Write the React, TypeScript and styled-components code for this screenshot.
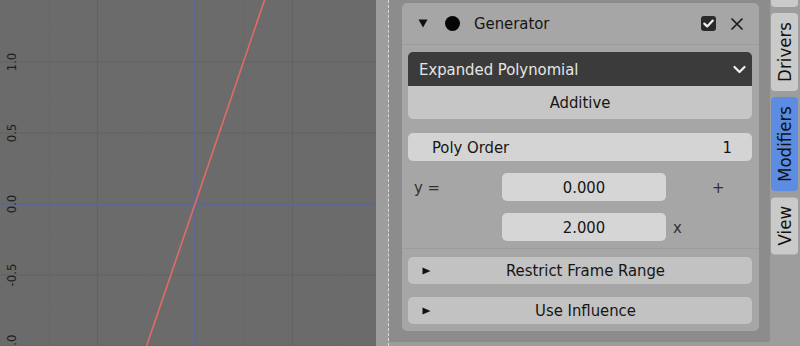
import styled, { createGlobalStyle } from 'styled-components';

const UI_FONT = `"DejaVu Sans Condensed", "DejaVu Sans", "Liberation Sans", sans-serif`;

const GlobalStyle = createGlobalStyle`
  html, body {
    margin: 0;
    padding: 0;
  }
  body {
    background: #9d9d9d;
    font-family: ${UI_FONT};
  }
`;

const Screen = styled.div`
  display: flex;
  width: 800px;
  height: 346px;
  overflow: hidden;
`;

const GraphArea = styled.div`
  flex: none;
  width: 376px;
  height: 346px;
  background: #6b6b6b;
`;

const RightRegion = styled.div`
  flex: 1;
  display: flex;
  padding-left: 12px;
  background: #9d9d9d;
`;

const Splitter = styled.div`
  flex: none;
  width: 0;
  border-left: 1px dashed #dadada;
`;

const Sidebar = styled.div`
  flex: none;
  box-sizing: border-box;
  width: 381px;
  height: 342px;
  padding: 3px 11px 0 13px;
  background: #8c8c8c;
`;

const Panel = styled.div`
  box-sizing: border-box;
  height: 328px;
  display: flex;
  flex-direction: column;
  background: #a6a6a6;
  border-radius: 5px;
  color: #151515;
  font-size: 16.5px;
`;

const Header = styled.div`
  height: 41px;
  display: flex;
  align-items: center;
  padding: 0 16px;
  border-bottom: 1px solid #9c9c9c;
`;

const Dot = styled.div`
  width: 15px;
  height: 15px;
  margin: 0 14px 0 17px;
  border-radius: 50%;
  background: #050505;
`;

const HeaderTitle = styled.span`
  flex: 1;
`;

const HeaderIcon = styled.svg<{ $gap?: number }>`
  display: block;
  margin-left: ${(p) => p.$gap ?? 0}px;
`;

const Body = styled.div`
  padding: 0 7px 0 6px;
  display: flex;
  flex-direction: column;
`;

const ModeGroup = styled.div`
  margin-top: 7px;
  border-radius: 5px;
  overflow: hidden;
`;

const Dropdown = styled.div`
  height: 34px;
  display: flex;
  align-items: center;
  justify-content: space-between;
  padding: 0 6px 0 11px;
  background: #3b3b3b;
  color: #e6e6e6;
`;

const GroupButton = styled.div`
  height: 33px;
  display: flex;
  align-items: center;
  justify-content: center;
  background: #c6c6c6;
`;

const NumberField = styled.div<{ $top: number }>`
  box-sizing: border-box;
  height: 28px;
  margin-top: ${(p) => p.$top}px;
  display: flex;
  align-items: center;
  justify-content: space-between;
  padding: 0 20px 0 24px;
  background: #d4d4d4;
  border-radius: 5px;
`;

const CoeffRow = styled.div`
  margin-top: 12px;
  height: 28px;
  display: grid;
  grid-template-columns: 94px 164px 1fr;
  align-items: center;
`;

const CoeffLabel = styled.span<{ $pad: number }>`
  padding-left: ${(p) => p.$pad}px;
  color: #303030;
`;

const CoeffValue = styled.div`
  height: 28px;
  display: flex;
  align-items: center;
  justify-content: center;
  background: #d6d6d6;
  border-radius: 5px;
`;

const Divider = styled.div`
  height: 1px;
  margin: 7px -7px 0 -6px;
  background: #9c9c9c;
`;

const SubPanel = styled.div<{ $top: number }>`
  height: 27px;
  margin-top: ${(p) => p.$top}px;
  display: flex;
  align-items: center;
  padding: 0 0 0 14px;
  background: #c2c2c2;
  border-radius: 5px;
`;

const SubPanelLabel = styled.span`
  flex: 1;
  text-align: center;
  padding-right: 12px;
`;

const TabColumn = styled.div`
  flex: 1;
  display: flex;
  flex-direction: column;
  gap: 6px;
  padding-left: 1px;
`;

/* tab scrolled mostly out of view above the column */
const TabStub = styled.div`
  width: 27px;
  height: 7px;
  background: #cacaca;
  border-radius: 0 0 4px 4px;
`;

const Tab = styled.div<{ $active?: boolean }>`
  width: 27px;
  padding: 9px 0;
  display: flex;
  align-items: center;
  justify-content: center;
  writing-mode: vertical-rl;
  transform: rotate(180deg);
  font-size: 18.5px;
  color: #111;
  background: ${(p) => (p.$active ? '#5c8de2' : '#cacaca')};
  border-radius: 4px;
`;

// graph geometry
const ORIGIN_X = 195;
const ORIGIN_Y = 204;
const UNIT_Y = 142; // px per 1.0
const X_STEP = 97.5;

const GraphView = () => {
  const majorX = [ORIGIN_X - X_STEP, ORIGIN_X + X_STEP];
  const minorX = [-1.5, -0.5, 0.5, 1.5].map((k) => ORIGIN_X + k * X_STEP);
  const ticks = [1, 0.5, 0, -0.5, -1];
  const minorY = [1.25, 0.75, 0.25, -0.25, -0.75].map((v) => ORIGIN_Y - v * UNIT_Y);
  const slope = 0.341;
  return (
    <svg width="376" height="346" viewBox="0 0 376 346" style={{ display: 'block' }}>
      {minorX.map((x) => (
        <line key={`mx${x}`} x1={x} y1={0} x2={x} y2={346} stroke="#696969" strokeWidth="1" />
      ))}
      {minorY.map((y) => (
        <line key={`my${y}`} x1={0} y1={y} x2={376} y2={y} stroke="#696969" strokeWidth="1" />
      ))}
      {majorX.map((x) => (
        <line key={`X${x}`} x1={x} y1={0} x2={x} y2={346} stroke="#626262" strokeWidth="1" />
      ))}
      {ticks
        .filter((t) => t !== 0)
        .map((t) => (
          <line
            key={`Y${t}`}
            x1={0}
            y1={ORIGIN_Y - t * UNIT_Y}
            x2={376}
            y2={ORIGIN_Y - t * UNIT_Y}
            stroke="#626262"
            strokeWidth="1"
          />
        ))}
      <line x1={0} y1={ORIGIN_Y} x2={376} y2={ORIGIN_Y} stroke="#5d6890" strokeWidth="2" />
      <line x1={ORIGIN_X} y1={0} x2={ORIGIN_X} y2={346} stroke="#5d6890" strokeWidth="2" />
      <line
        x1={ORIGIN_X + ORIGIN_Y * slope}
        y1={0}
        x2={ORIGIN_X - (346 - ORIGIN_Y) * slope}
        y2={346}
        stroke="#e26a6a"
        strokeWidth="1.6"
      />
      {ticks.map((t) => (
        <text
          key={`t${t}`}
          transform={`translate(16 ${ORIGIN_Y - t * UNIT_Y}) rotate(-90)`}
          textAnchor="middle"
          fontFamily={UI_FONT}
          fontSize="13"
          fill="#1e1e1e"
        >
          {t.toFixed(1)}
        </text>
      ))}
    </svg>
  );
};

const RightArrow = () => (
  <svg width="9" height="8" viewBox="0 0 9 8">
    <path d="M0.5 0.5 L8.5 4 L0.5 7.5 Z" fill="#111" />
  </svg>
);

export default function App() {
  return (
    <>
      <GlobalStyle />
      <Screen>
        <GraphArea>
          <GraphView />
        </GraphArea>
        <RightRegion>
          <Splitter />
          <Sidebar>
            <Panel>
              <Header>
                <HeaderIcon width="10" height="9" viewBox="0 0 10 9">
                  <path d="M0.5 0.5 H9.5 L5 8.5 Z" fill="#111" />
                </HeaderIcon>
                <Dot />
                <HeaderTitle>Generator</HeaderTitle>
                <HeaderIcon width="15" height="15" viewBox="0 0 15 15">
                  <rect x="0" y="0" width="15" height="15" rx="3" fill="#2a2a2a" />
                  <path
                    d="M3.3 7.6 L6.2 10.4 L11.8 4.6"
                    fill="none"
                    stroke="#f2f2f2"
                    strokeWidth="2.2"
                    strokeLinecap="round"
                    strokeLinejoin="round"
                  />
                </HeaderIcon>
                <HeaderIcon $gap={15} width="12" height="12" viewBox="0 0 12 12">
                  <path d="M1 1 L11 11 M11 1 L1 11" stroke="#1c1c1c" strokeWidth="1.7" strokeLinecap="round" />
                </HeaderIcon>
              </Header>
              <Body>
                <ModeGroup>
                  <Dropdown>
                    <span>Expanded Polynomial</span>
                    <svg width="13" height="9" viewBox="0 0 13 9">
                      <path
                        d="M1.5 2 L6.5 7 L11.5 2"
                        fill="none"
                        stroke="#f0f0f0"
                        strokeWidth="2.2"
                        strokeLinecap="round"
                        strokeLinejoin="round"
                      />
                    </svg>
                  </Dropdown>
                  <GroupButton>Additive</GroupButton>
                </ModeGroup>
                <NumberField $top={14}>
                  <span>Poly Order</span>
                  <span>1</span>
                </NumberField>
                <CoeffRow>
                  <CoeffLabel $pad={6}>y =</CoeffLabel>
                  <CoeffValue>0.000</CoeffValue>
                  <CoeffLabel $pad={46}>+</CoeffLabel>
                </CoeffRow>
                <CoeffRow>
                  <span />
                  <CoeffValue>2.000</CoeffValue>
                  <CoeffLabel $pad={7}>x</CoeffLabel>
                </CoeffRow>
                <Divider />
                <SubPanel $top={8}>
                  <RightArrow />
                  <SubPanelLabel>Restrict Frame Range</SubPanelLabel>
                </SubPanel>
                <SubPanel $top={13}>
                  <RightArrow />
                  <SubPanelLabel>Use Influence</SubPanelLabel>
                </SubPanel>
              </Body>
            </Panel>
          </Sidebar>
          <TabColumn>
            <TabStub />
            <Tab>Drivers</Tab>
            <Tab $active>Modifiers</Tab>
            <Tab>View</Tab>
          </TabColumn>
        </RightRegion>
      </Screen>
    </>
  );
}
